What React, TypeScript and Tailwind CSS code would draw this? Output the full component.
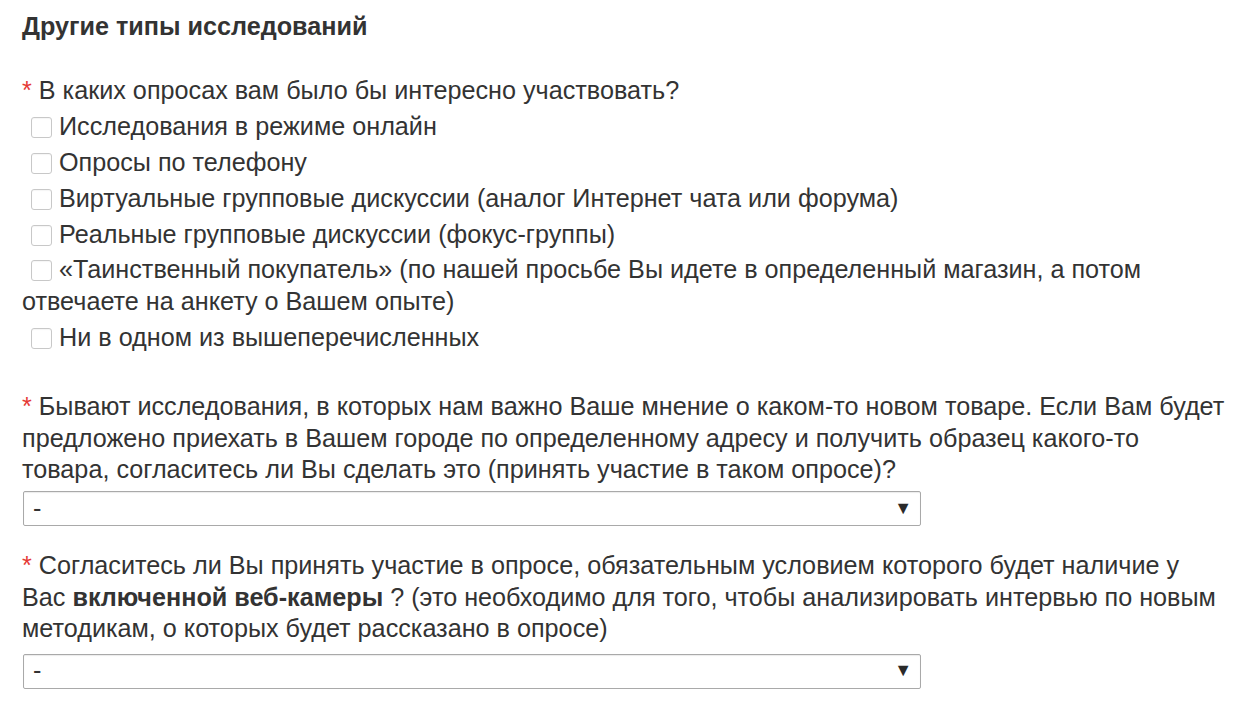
import React from "react";

const Box = () => (
  <span className="inline-block ml-[9px] w-[21px] h-[21px] border border-[#c8c8c8] rounded-[3px] bg-white align-[-3px] mr-[7px] shadow-[inset_0_1px_1px_rgba(0,0,0,0.04)]" />
);

const Star = () => <span className="text-[#e53935]">*</span>;

const Select = ({ mt }: { mt: string }) => (
  <div className={`${mt} ml-[1px] w-[898px] h-[35px] border border-[#a9a9a9] rounded-[2px] flex items-center justify-between pl-[9px] pr-[8px] bg-white shadow-[inset_0_1px_1px_rgba(0,0,0,0.08)]`}>
    <span>-</span>
    <span className="text-[18px] text-[#2a2a2a]">▼</span>
  </div>
);

export default function App() {
  const opts = [
    "Исследования в режиме онлайн",
    "Опросы по телефону",
    "Виртуальные групповые дискуссии (аналог Интернет чата или форума)",
    "Реальные групповые дискуссии (фокус-группы)",
    "«Таинственный покупатель» (по нашей просьбе Вы идете в определенный магазин, а потом отвечаете на анкету о Вашем опыте)",
    "Ни в одном из вышеперечисленных",
  ];
  return (
    <div
      className="bg-white text-[#333] text-[25.2px] leading-[31.6px] pl-[22px] pr-[23px] pt-[11px] min-h-[720px] w-[1251px]"
      style={{ fontFamily: '"Liberation Sans", Arial, sans-serif' }}
    >
      <h2 className="font-bold text-[25.2px] mb-[32px]">Другие типы исследований</h2>
      <div>
        <Star /> В каких опросах вам было бы интересно участвовать?
      </div>
      <div className="flex flex-col gap-[3.8px] mt-[4px] leading-[32px]">
        {opts.map((o) => (
          <div key={o}>
            <Box />
            {o}
          </div>
        ))}
      </div>
      <div className="mt-[38px]">
        <Star /> Бывают исследования, в которых нам важно Ваше мнение о каком-то новом товаре. Если Вам будет
        <br />
        предложено приехать в Вашем городе по определенному адресу и получить образец какого-то
        <br />
        товара, согласитесь ли Вы сделать это (принять участие в таком опросе)?
      </div>
      <Select mt="mt-[5px]" />
      <div className="mt-[24px]">
        <Star /> Согласитесь ли Вы принять участие в опросе, обязательным условием которого будет наличие у
        <br />
        Вас <b>включенной веб-камеры</b> ? (это необходимо для того, чтобы анализировать интервью по новым
        <br />
        методикам, о которых будет рассказано в опросе)
      </div>
      <Select mt="mt-[9px]" />
    </div>
  );
}
